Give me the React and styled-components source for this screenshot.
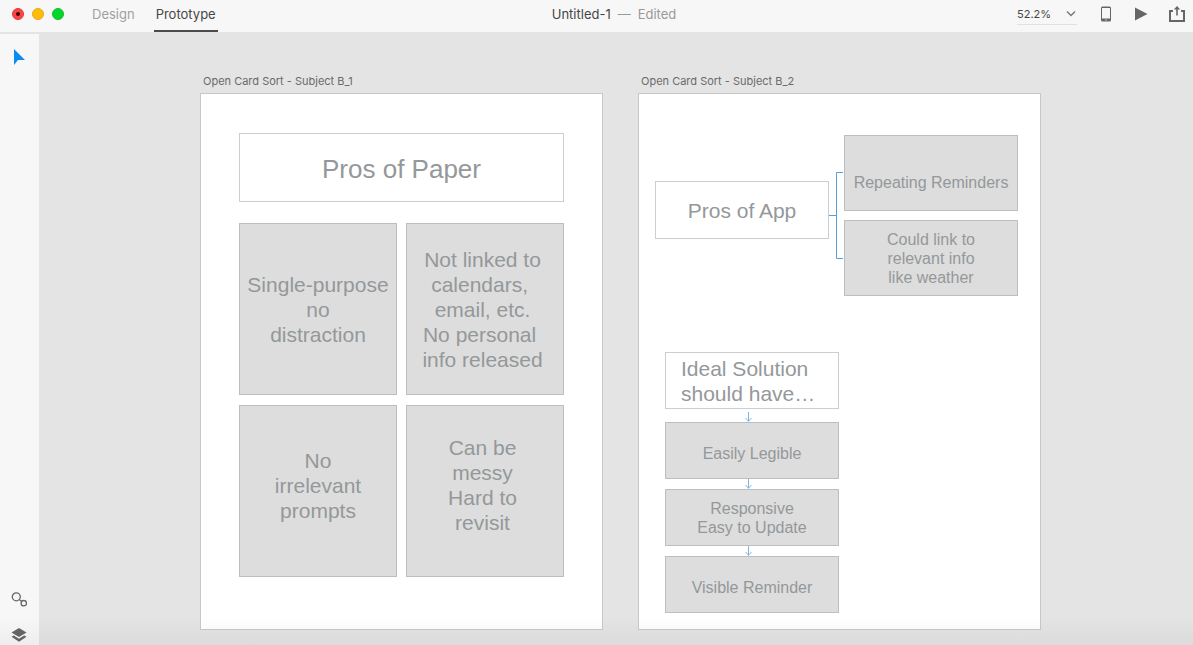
import React from "react";
import styled, { createGlobalStyle } from "styled-components";

const uiFont = `Inter, "Liberation Sans", sans-serif`;
const boardFont = `"Liberation Sans", Arial, sans-serif`;

const GlobalStyle = createGlobalStyle`
  *, *::before, *::after { box-sizing: border-box; }
  html, body { margin: 0; }
  body { background: #e4e4e4; font-family: ${uiFont}; color: #4b4b4b; }
  button, select { font: inherit; color: inherit; border: 0; padding: 0; background: none; }
  h2, p { margin: 0; font-weight: 400; }
  svg { display: block; }
`;

const Shell = styled.div`
  display: flex;
  flex-direction: column;
  height: 100vh;
  overflow: hidden;
`;

const TitleBar = styled.header`
  flex: none;
  display: grid;
  grid-template-columns: 1fr auto 1fr;
  height: 32px;
  padding: 0 8px 0 12px;
  background: #f7f7f7;
  font-size: 13px;
  line-height: 28px;
`;

const LeftGroup = styled.div`
  display: flex;
`;

const WindowControls = styled.div`
  display: flex;
  align-items: center;
  gap: 8px;
  height: 28px;
  margin-right: 26px;
`;

const Light = styled.button`
  display: grid;
  place-items: center;
  width: 12px;
  height: 12px;
  border: 1px solid ${(p) => p.$edge};
  border-radius: 50%;
  background: ${(p) => p.$fill};
`;

const Dot = styled.span`
  width: 4px;
  height: 4px;
  border-radius: 50%;
  background: #3f0404;
`;

const ModeTabs = styled.nav`
  display: flex;
  gap: 17px;
`;

const ModeTab = styled.button`
  height: 32px;
  padding: 0 2px 2px;
  line-height: 26px;
  color: ${(p) => (p.$active ? "#464646" : "#a0a0a0")};
  border-bottom: 2px solid ${(p) => (p.$active ? "#4b4b4b" : "transparent")};
`;

const DocumentTitle = styled.div`
  display: flex;
  gap: 7px;
  padding-left: 31px;
  color: #464646;
`;

const Muted = styled.span`
  color: #999;
`;

const RightGroup = styled.div`
  display: flex;
  justify-content: flex-end;
  align-items: center;
  height: 28px;
`;

const ZoomField = styled.label`
  display: flex;
  align-items: center;
  width: 60px;
  height: 22px;
  margin-right: 24px;
  border-bottom: 1px solid #e1e1e1;
  font-size: 11px;
`;

const ZoomSelect = styled.select`
  appearance: none;
  flex: 1;
  min-width: 0;
  height: 18px;
  line-height: 18px;
  color: #464646;
  outline: 0;
`;

const IconButton = styled.button`
  display: grid;
  place-items: center;
  color: #666;
`;

const ActionRow = styled.div`
  display: flex;
  align-items: center;
  gap: 20px;
`;

const Workspace = styled.div`
  flex: 1;
  display: flex;
  min-height: 0;
  position: relative;
`;

const ToolRail = styled.aside`
  flex: none;
  display: flex;
  flex-direction: column;
  align-items: center;
  width: 39px;
  margin-top: 2px;
  padding: 14px 1px 3px 0;
  background: #f7f7f7;
`;

const RailBottom = styled.div`
  display: flex;
  flex-direction: column;
  gap: 21px;
  margin-top: auto;
`;

const Canvas = styled.main`
  flex: 1;
  display: flex;
  align-items: flex-start;
  gap: 35px;
  min-width: 0;
  padding: 41px 0 0 161px;
  overflow: hidden;
`;

const BottomShade = styled.div`
  position: absolute;
  inset: auto 0 0;
  height: 28px;
  background: linear-gradient(transparent, rgba(0, 0, 0, 0.04));
  pointer-events: none;
`;

const BoardFrame = styled.section`
  flex: none;
  width: 403px;
`;

const BoardName = styled.h2`
  height: 20px;
  padding-left: 3px;
  font-size: 11px;
  line-height: 16px;
  color: #6a6a6a;
`;

const Board = styled.div`
  height: 537px;
  padding: ${(p) => p.$padding};
  border: 1px solid #c8c8c8;
  background: #fff;
  font-family: ${boardFont};
`;

const Box = styled.div`
  display: flex;
  align-items: center;
  justify-content: ${(p) => (p.$align === "left" ? "flex-start" : "center")};
  width: ${(p) => p.$width};
  height: ${(p) => p.$height};
  padding: ${(p) => p.$padding || "0"};
  border: 1px solid ${(p) => (p.$heading ? "#cdcdcd" : "#bebebe")};
  background: ${(p) => (p.$heading ? "#fff" : "#ddd")};
`;

const sizes = {
  large: "26px/30px",
  medium: "21px/25px",
  small: "16px/19px",
};

const BoxText = styled.p`
  font: ${(p) => sizes[p.$size]} ${boardFont};
  color: #94989a;
  text-align: ${(p) => p.$align || "center"};
  white-space: pre;
`;

const CardGrid = styled.div`
  display: grid;
  grid-template-columns: 1fr 1fr;
  gap: 10px 9px;
  margin-top: 21px;
`;

const Tree = styled.div`
  display: flex;
  align-items: center;
`;

const TreeRoot = styled.div`
  margin-bottom: 11px;
`;

const TreeLeaves = styled.div`
  display: grid;
  gap: 9px;
`;

const Flow = styled.div`
  width: 174px;
  margin: 56px 0 0 10px;
`;

const ArrowSlot = styled.div`
  display: flex;
  align-items: flex-end;
  justify-content: center;
  height: ${(p) => (p.$tall ? "13px" : "10px")};
  padding-right: 8px;
`;

function Card({ text, size = "medium", align, ...box }) {
  return (
    <Box $align={align} {...box}>
      <BoxText $size={size} $align={align}>{text}</BoxText>
    </Box>
  );
}

function Arrow({ tall }) {
  return (
    <ArrowSlot $tall={tall}>
      <svg width="8" height="10" viewBox="0 0 8 10" fill="none" stroke="#7db5e2">
        <path d="M4.5 0V9.500M1.500 6 4.500 9.200 7.500 6" />
      </svg>
    </ArrowSlot>
  );
}

const notes = [
  { text: "Single-purpose\nno\ndistraction" },
  {
    text: "Not linked to\ncalendars, \nemail, etc.\nNo personal \ninfo released",
    $padding: "0 5px 0 0",
  },
  { text: "No\nirrelevant\nprompts", $padding: "0 0 12px" },
  { text: "Can be\nmessy\nHard to\nrevisit", $padding: "0 5px 12px 0" },
];

const steps = [
  { text: "Easily Legible", $padding: "6px 0 0" },
  { text: "Responsive\nEasy to Update" },
  { text: "Visible Reminder", $padding: "6px 0 0" },
];

export default function App() {
  return (
    <Shell>
      <GlobalStyle />
      <TitleBar>
        <LeftGroup>
          <WindowControls>
            <Light aria-label="Close" $fill="#fc4543" $edge="#e5373a"><Dot /></Light>
            <Light aria-label="Minimize" $fill="#fdbc0a" $edge="#eda913" />
            <Light aria-label="Zoom window" $fill="#06d52c" $edge="#0fbf2b" />
          </WindowControls>
          <ModeTabs>
            <ModeTab>Design</ModeTab>
            <ModeTab $active aria-current="page">Prototype</ModeTab>
          </ModeTabs>
        </LeftGroup>
        <DocumentTitle>
          <span>Untitled-1</span>
          <Muted>—</Muted>
          <Muted>Edited</Muted>
        </DocumentTitle>
        <RightGroup>
          <ZoomField>
            <ZoomSelect aria-label="Zoom level" defaultValue="52.2%">
              <option>52.2%</option>
              <option>100%</option>
            </ZoomSelect>
            <svg width="12" height="8" viewBox="0 0 12 8" fill="none" stroke="#777" strokeWidth="1.4">
              <path d="M2 1.500l4 4 4-4" />
            </svg>
          </ZoomField>
          <ActionRow>
            <IconButton aria-label="Device preview">
              <svg width="10" height="16" viewBox="0 0 10 16">
                <path
                  fill="currentColor"
                  fillRule="evenodd"
                  d="M1.500 0.500h7A1.500 1.500 0 0 1 10 2v12A1.500 1.500 0 0 1 8.500 15.500h-7A1.500 1.500 0 0 1 0 14v-12A1.500 1.500 0 0 1 1.500 0.500zM1 2v10.500h8V2zM4.400 13.500v1h1.200v-1z"
                />
              </svg>
            </IconButton>
            <IconButton aria-label="Play">
              <svg width="18" height="14" viewBox="0 0 18 14">
                <path d="M4 0.500 16.500 7 4 13.500z" fill="currentColor" />
              </svg>
            </IconButton>
            <IconButton aria-label="Share">
              <svg width="16" height="16" viewBox="0 0 16 16" fill="none" stroke="currentColor">
                <path d="M4 5H1v10h14V5h-3" strokeWidth="2" />
                <path d="M8 9.500V2" strokeWidth="1.600" />
                <path d="M8 0l3.200 3.500H4.800z" fill="currentColor" stroke="none" />
              </svg>
            </IconButton>
          </ActionRow>
        </RightGroup>
      </TitleBar>

      <Workspace>
        <ToolRail>
          <IconButton aria-label="Select">
            <svg width="12" height="18" viewBox="0 0 12 18">
              <path d="M1 1v16l4-5H12z" fill="#0a8bf0" />
            </svg>
          </IconButton>
          <RailBottom>
            <IconButton aria-label="Assets">
              <svg width="16" height="15" viewBox="0 0 16 15" fill="none" stroke="currentColor" strokeWidth="1.300">
                <circle cx="5.300" cy="4.800" r="4" />
                <circle cx="12.800" cy="11.200" r="2.700" />
                <path d="M8.200 7.500 10.800 9.500" />
              </svg>
            </IconButton>
            <IconButton aria-label="Layers">
              <svg width="16" height="14" viewBox="0 0 16 14" fill="currentColor">
                <path d="M8 0 15.500 4.500 8 9 0.500 4.500z" />
                <path d="M0.500 8.800 2.800 7.600 8 10.800 13.200 7.600 15.500 8.800 8 13.800z" />
              </svg>
            </IconButton>
          </RailBottom>
        </ToolRail>

        <Canvas>
          <BoardFrame>
            <BoardName>Open Card Sort - Subject B_1</BoardName>
            <Board $padding="39px 38px 0">
              <Card $heading size="large" $height="69px" $padding="2px 0 0" text="Pros of Paper" />
              <CardGrid>
                {notes.map((note) => (
                  <Card key={note.text} $height="172px" {...note} />
                ))}
              </CardGrid>
            </Board>
          </BoardFrame>

          <BoardFrame>
            <BoardName>Open Card Sort - Subject B_2</BoardName>
            <Board $padding="41px 0 0 16px">
              <Tree>
                <TreeRoot>
                  <Card $heading $width="174px" $height="58px" text="Pros of App" />
                </TreeRoot>
                <svg width="15" height="89" viewBox="0 0 15 89" fill="none" stroke="#5a9fd4">
                  <path d="M0 44.500H7.500M14 1.500H7.500V87.500H14" />
                </svg>
                <TreeLeaves>
                  <Card size="small" $width="174px" $height="76px" $padding="18px 0 0" text="Repeating Reminders" />
                  <Card size="small" $width="174px" $height="76px" text={"Could link to\nrelevant info\nlike weather"} />
                </TreeLeaves>
              </Tree>
              <Flow>
                <Card $heading align="left" $height="57px" $padding="0 0 0 15px" text={"Ideal Solution\nshould have…"} />
                {steps.map((step, i) => (
                  <React.Fragment key={step.text}>
                    <Arrow tall={i === 0} />
                    <Card size="small" $height="57px" {...step} />
                  </React.Fragment>
                ))}
              </Flow>
            </Board>
          </BoardFrame>
        </Canvas>
        <BottomShade />
      </Workspace>
    </Shell>
  );
}
